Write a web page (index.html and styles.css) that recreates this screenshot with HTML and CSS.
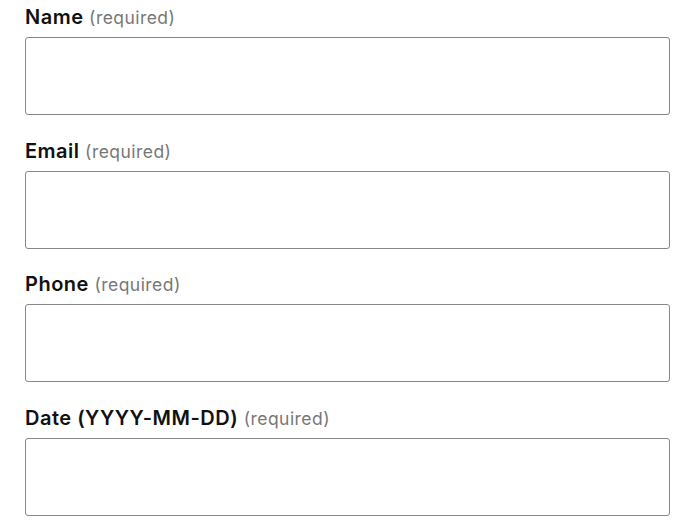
FILE: index.html
```html
<!DOCTYPE html>
<html lang="en">
<head>
  <meta charset="UTF-8">
  <title>Booking form</title>
  <link rel="stylesheet" href="styles.css">
</head>
<body>
  <form class="form">
    <div class="field">
      <label for="name">Name <span class="req">(required)</span></label>
      <input type="text" id="name">
    </div>
    <div class="field">
      <label for="email">Email <span class="req">(required)</span></label>
      <input type="email" id="email">
    </div>
    <div class="field">
      <label for="phone">Phone <span class="req">(required)</span></label>
      <input type="tel" id="phone">
    </div>
    <div class="field">
      <label for="date">Date (YYYY-MM-DD) <span class="req">(required)</span></label>
      <input type="text" id="date">
    </div>
  </form>
</body>
</html>
```

FILE: styles.css
```css
body {
  margin: 0;
  background: #fff;
  color: #111;
  font-family: Inter, "Noto Sans", sans-serif;
}

.form {
  padding: 4px 19px 0 25px;
}

.field {
  display: flex;
  flex-direction: column;
  margin-bottom: 22.7px;
}

label {
  font-size: 20px;
  font-weight: 600;
  letter-spacing: 0.5px;
  line-height: 26px;
  height: 26px;
  margin-bottom: 7px;
}

.req {
  font-size: 17.5px;
  font-weight: 400;
  letter-spacing: 0.45px;
  line-height: 1;
  color: #777;
}

input {
  height: 78px;
  box-sizing: border-box;
  border: 1px solid #888;
  border-radius: 3px;
  font-size: 17px;
  padding: 0 12px;
}
```
